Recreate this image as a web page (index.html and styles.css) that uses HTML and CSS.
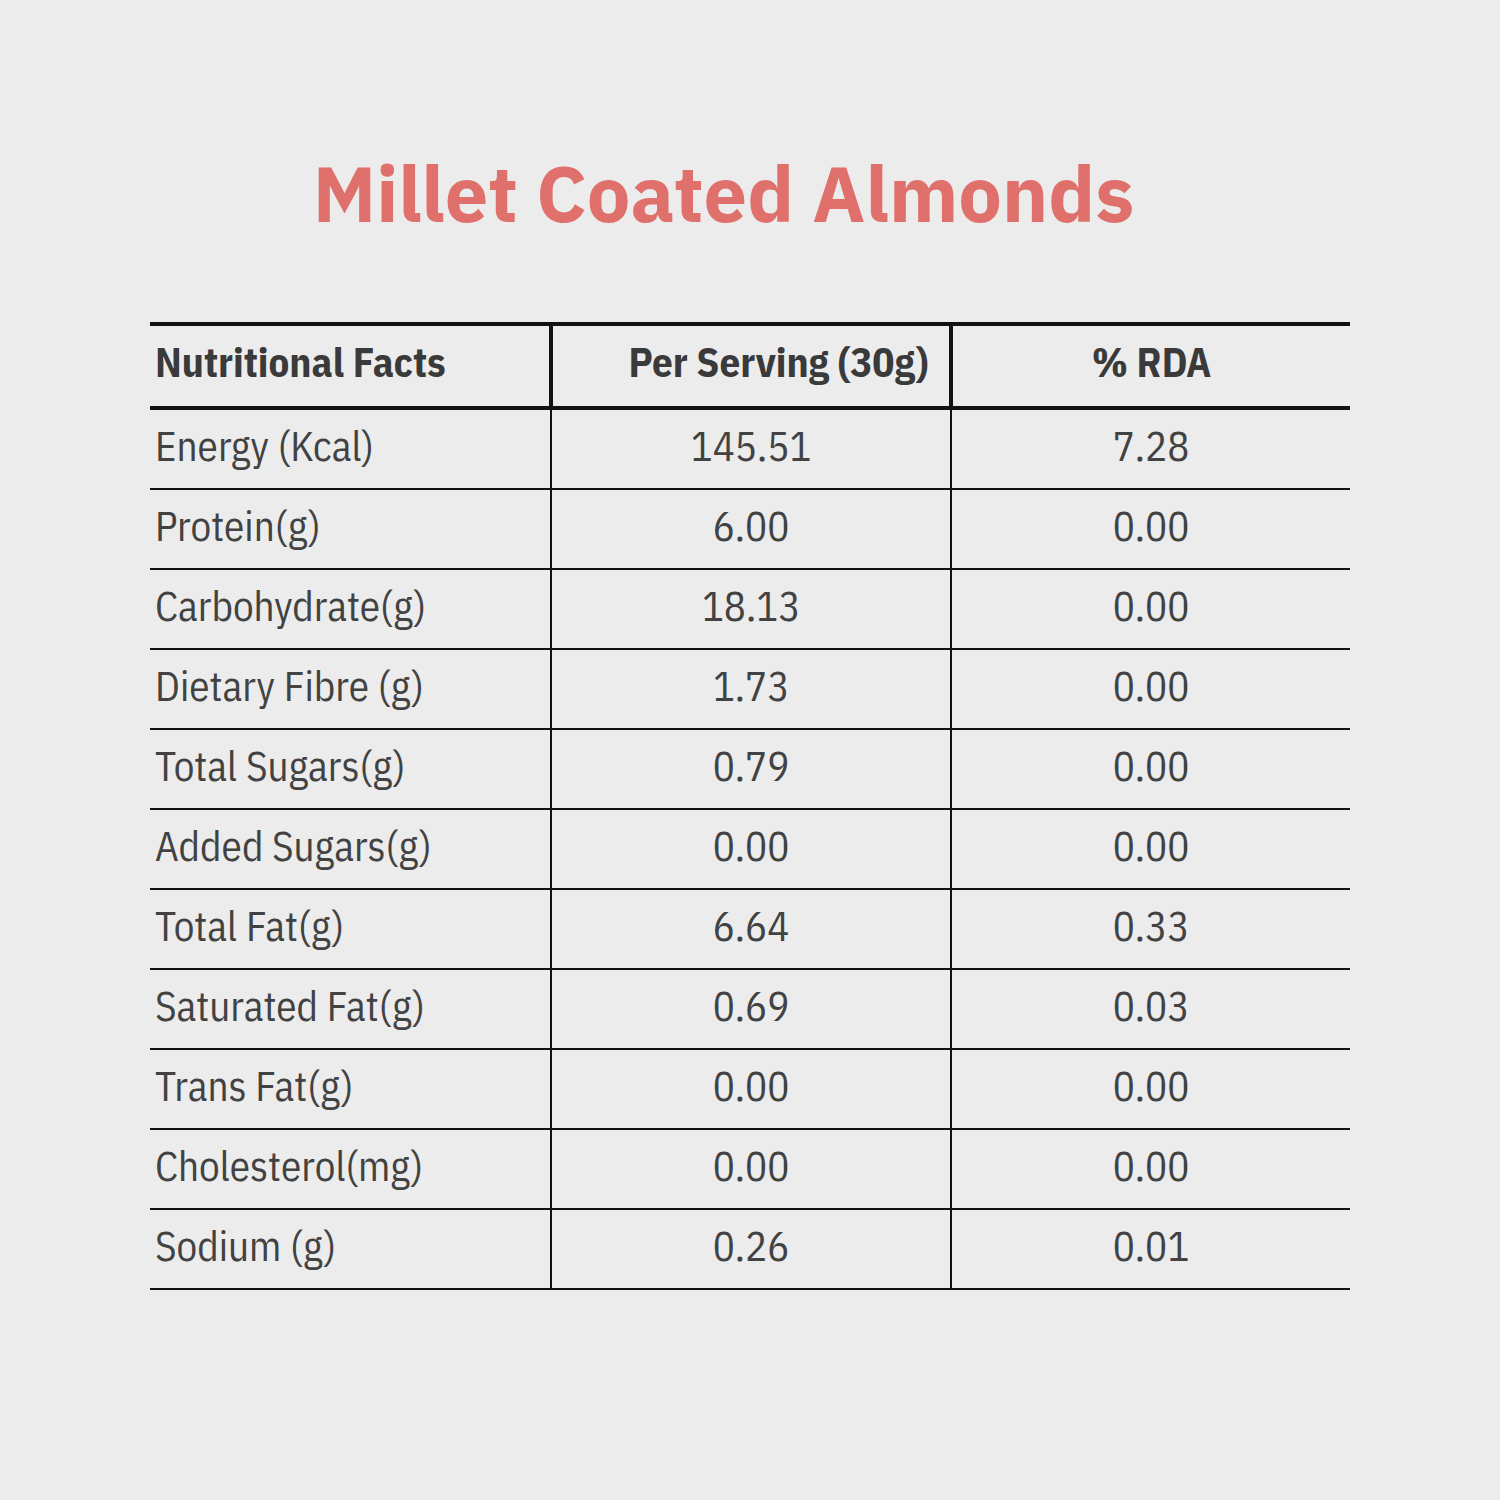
FILE: index.html
```html
<!DOCTYPE html>
<html lang="en">
<head>
<meta charset="utf-8">
<title>Millet Coated Almonds – Nutritional Facts</title>
<link rel="stylesheet" href="styles.css">
</head>
<body>
<main class="page">
  <h1 class="title">Millet Coated Almonds</h1>
  <div class="facts">
    <div class="row head">
      <div class="cell name">Nutritional Facts</div>
      <div class="cell val serving">Per Serving (30g)</div>
      <div class="cell val">% RDA</div>
    </div>
    <div class="row"><div class="cell name">Energy (Kcal)</div><div class="cell val">145.51</div><div class="cell val">7.28</div></div>
    <div class="row"><div class="cell name">Protein(g)</div><div class="cell val">6.00</div><div class="cell val">0.00</div></div>
    <div class="row"><div class="cell name">Carbohydrate(g)</div><div class="cell val">18.13</div><div class="cell val">0.00</div></div>
    <div class="row"><div class="cell name">Dietary Fibre (g)</div><div class="cell val">1.73</div><div class="cell val">0.00</div></div>
    <div class="row"><div class="cell name">Total Sugars(g)</div><div class="cell val">0.79</div><div class="cell val">0.00</div></div>
    <div class="row"><div class="cell name">Added Sugars(g)</div><div class="cell val">0.00</div><div class="cell val">0.00</div></div>
    <div class="row"><div class="cell name">Total Fat(g)</div><div class="cell val">6.64</div><div class="cell val">0.33</div></div>
    <div class="row"><div class="cell name">Saturated Fat(g)</div><div class="cell val">0.69</div><div class="cell val">0.03</div></div>
    <div class="row"><div class="cell name">Trans Fat(g)</div><div class="cell val">0.00</div><div class="cell val">0.00</div></div>
    <div class="row"><div class="cell name">Cholesterol(mg)</div><div class="cell val">0.00</div><div class="cell val">0.00</div></div>
    <div class="row"><div class="cell name">Sodium (g)</div><div class="cell val">0.26</div><div class="cell val">0.01</div></div>
  </div>
</main>
</body>
</html>
```
FILE: styles.css
```css
html, body {
  margin: 0;
  padding: 0;
  background: #ececec;
}

.page {
  width: 1500px;
  height: 1500px;
  box-sizing: border-box;
  padding-top: 154px;
}

.title {
  margin: 0;
  padding-right: 53px;
  text-align: center;
  font-family: "IBM Plex Sans", "Open Sans", sans-serif;
  font-weight: 700;
  font-size: 77.5px;
  line-height: 78px;
  color: #e0706b;
}

.facts {
  width: 1200px;
  margin: 90px 0 0 150px;
  border-top: 4px solid #111;
  font-family: "IBM Plex Sans Condensed", "Roboto Condensed", sans-serif;
  color: #424242;
}

.row {
  display: grid;
  grid-template-columns: 400px 400px 400px;
  height: 80px;
  box-sizing: border-box;
  border-bottom: 2px solid #111;
}

.row.head {
  height: 84px;
  border-bottom-width: 4px;
}

.cell {
  display: flex;
  align-items: center;
  padding-bottom: 7px;
  font-size: 41px;
  white-space: nowrap;
}

.cell + .cell {
  border-left: 2px solid #111;
}

.head .cell + .cell {
  border-left-width: 4px;
  margin-left: -1px;
}

.name {
  padding-left: 5px;
}

.val {
  justify-content: center;
}

.head .cell {
  font-weight: 700;
  font-size: 41px;
  padding-bottom: 10px;
  color: #3a3a3a;
}

.head .serving {
  padding-left: 54px;
}
```
